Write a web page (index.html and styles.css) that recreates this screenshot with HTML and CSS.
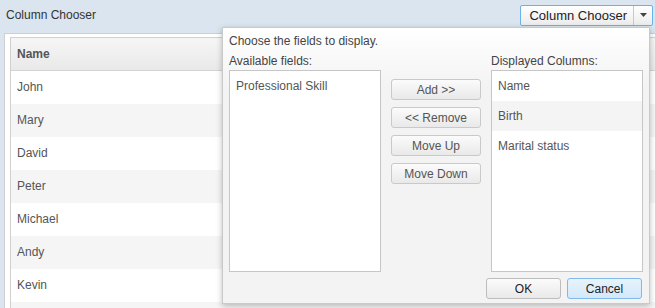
FILE: index.html
```html
<!DOCTYPE html>
<html lang="en">
<head>
<title>Column Chooser</title>
<meta charset="utf-8">
<link rel="stylesheet" href="styles.css">
</head>
<body>

<header class="toolbar">
  <span class="title">Column Chooser</span>
  <div class="split_button">
    <span class="split_main">Column Chooser</span>
    <span class="split_arrow"><svg width="7" height="4" viewBox="0 0 7 4"><path d="M0 0h7L3.5 4z" fill="#444"/></svg></span>
  </div>
</header>

<div class="panel">
  <div class="grid">
    <div class="grid_heading">Name</div>
    <div class="grid_row">John</div>
    <div class="grid_row alt">Mary</div>
    <div class="grid_row">David</div>
    <div class="grid_row alt">Peter</div>
    <div class="grid_row">Michael</div>
    <div class="grid_row alt">Andy</div>
    <div class="grid_row">Kevin</div>
    <div class="grid_row alt"></div>
  </div>
</div>

<!-- chooser popup, dropped from the toolbar button -->
<div class="chooser">
  <p class="intro">Choose the fields to display.</p>
  <div class="columns">
    <div class="side">
      <label class="side_label">Available fields:</label>
      <ul class="listbox">
        <li>Professional Skill</li>
      </ul>
    </div>
    <div class="actions">
      <button class="btn">Add &gt;&gt;</button>
      <button class="btn">&lt;&lt; Remove</button>
      <button class="btn">Move Up</button>
      <button class="btn">Move Down</button>
    </div>
    <div class="side">
      <label class="side_label">Displayed Columns:</label>
      <ul class="listbox">
        <li>Name</li>
        <li class="selected">Birth</li>
        <li>Marital status</li>
      </ul>
    </div>
  </div>
  <div class="footer">
    <button class="btn btn_wide">OK</button>
    <button class="btn btn_wide btn_primary">Cancel</button>
  </div>
</div>

</body>
</html>
```

FILE: styles.css
```css
body {
  margin: 0;
  height: 308px;
  overflow: hidden;
  background: #dae5ef;
  font-family: "Liberation Sans", Arial, sans-serif;
  font-size: 12px;
  color: #333;
  position: relative;
}
.toolbar {
  display: flex;
  align-items: center;
  justify-content: space-between;
  height: 30px;
  padding: 0 2px 0 6px;
}
.title {
  color: #333;
}
.split_button {
  display: flex;
  height: 19px;
  border: 1px solid #6cb2e6;
  border-radius: 2px;
  background: linear-gradient(#ffffff, #ececec);
  color: #222;
  font-size: 13px;
}
.split_main {
  padding: 0 6px 0 8px;
  line-height: 19px;
  border-right: 1px solid #c8c8c8;
}
.split_arrow {
  width: 18px;
  display: flex;
  align-items: center;
  justify-content: center;
}
.panel {
  margin: 3px 0 0 4px;
  background: #fff;
  border: 1px solid #cfcfcf;
  border-right: none;
  padding: 3px 0 0 5px;
}
.grid {
  border: 1px solid #d0d0d0;
  border-right: none;
}
.grid_heading {
  height: 32px;
  line-height: 32px;
  padding-left: 6px;
  font-weight: bold;
  color: #555;
  background: linear-gradient(#f6f6f6, #e9e9e9);
  border-bottom: 1px solid #d4d4d4;
}
.grid_row {
  height: 33px;
  line-height: 33px;
  padding-left: 6px;
  color: #555;
}
.grid_row.alt {
  background: #f5f5f5;
}

.chooser {
  position: absolute;
  left: 222px;
  top: 27px;
  width: 414px;
  height: 269px;
  padding: 6px 6px 0 6px;
  border: 1px solid #c9c9c9;
  background: linear-gradient(#ffffff, #f3f3f3 60px);
  box-shadow: 0 2px 6px rgba(0, 0, 0, 0.25);
  color: #444;
}
.intro {
  margin: 0;
  line-height: 14px;
}
.columns {
  display: flex;
  gap: 10px;
  margin-top: 6px;
}
.side {
  width: 152px;
  display: flex;
  flex-direction: column;
}
.side_label {
  line-height: 14px;
  margin-bottom: 2px;
}
.listbox {
  margin: 0;
  padding: 0;
  list-style: none;
  height: 200px;
  border: 1px solid #c6c6c6;
  background: #fff;
}
.listbox li {
  height: 30px;
  line-height: 30px;
  padding-left: 6px;
  color: #555;
}
.listbox li.selected {
  background: #f4f4f4;
}
.actions {
  width: 90px;
  display: flex;
  flex-direction: column;
  gap: 7px;
  padding-top: 25px;
}
.btn {
  height: 21px;
  padding: 0;
  border: 1px solid #c9c9c9;
  border-radius: 3px;
  background: linear-gradient(#fbfbfb, #e9e9e9);
  font-family: inherit;
  font-size: 12px;
  color: #555;
}
.footer {
  display: flex;
  justify-content: flex-end;
  gap: 6px;
  margin-top: 6px;
  padding-right: 1px;
}
.btn_wide {
  width: 75px;
  color: #222;
  border-color: #bdbdbd;
}
.btn_primary {
  background: linear-gradient(#e8f3fc, #d2e8fa);
  border-color: #80b9ea;
}
```
